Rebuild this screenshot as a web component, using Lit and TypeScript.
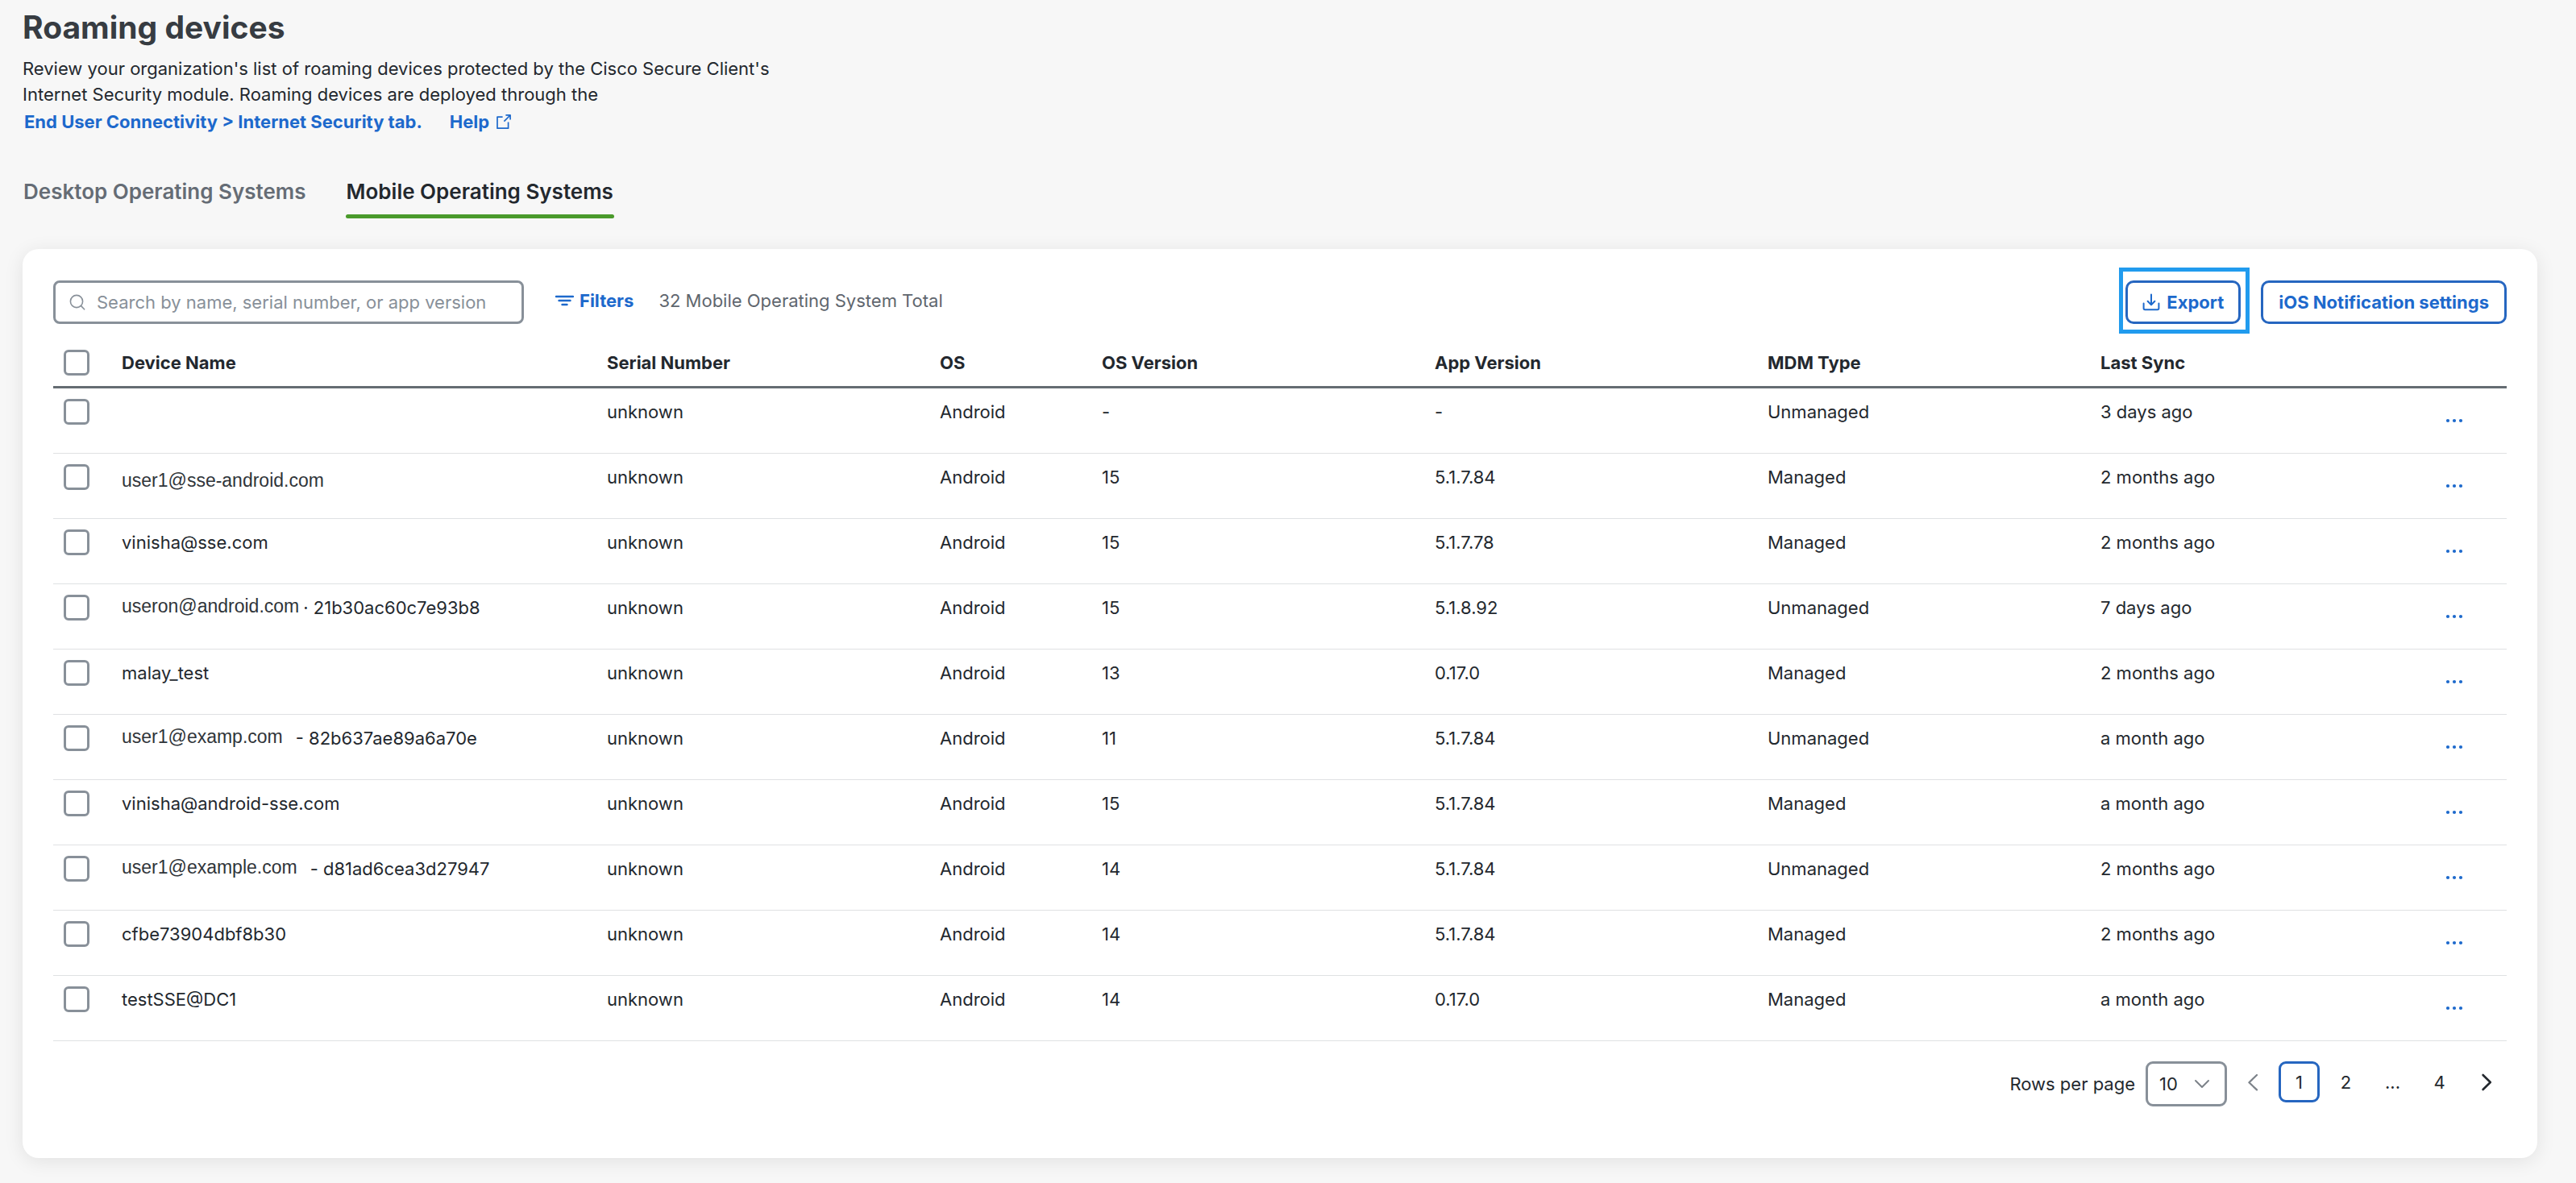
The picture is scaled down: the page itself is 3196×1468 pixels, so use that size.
import { LitElement, html, css, nothing } from "lit";
import { customElement } from "lit/decorators.js";
import { classMap } from "lit/directives/class-map.js";

interface Device {
  name: string;
  /** Name comes from a directory alias and is set in the alias typeface. */
  alias?: boolean;
  separator?: string;
  id?: string;
  osVersion: string;
  appVersion: string;
  mdm: string;
  sync: string;
}

const DEVICES: Device[] = [
  { name: "", osVersion: "-", appVersion: "-", mdm: "Unmanaged", sync: "3 days ago" },
  { name: "user1@sse-android.com", alias: true, osVersion: "15", appVersion: "5.1.7.84", mdm: "Managed", sync: "2 months ago" },
  { name: "vinisha@sse.com", osVersion: "15", appVersion: "5.1.7.78", mdm: "Managed", sync: "2 months ago" },
  { name: "useron@android.com", alias: true, separator: "·", id: "21b30ac60c7e93b8", osVersion: "15", appVersion: "5.1.8.92", mdm: "Unmanaged", sync: "7 days ago" },
  { name: "malay_test", osVersion: "13", appVersion: "0.17.0", mdm: "Managed", sync: "2 months ago" },
  { name: "user1@examp.com", alias: true, separator: "-", id: "82b637ae89a6a70e", osVersion: "11", appVersion: "5.1.7.84", mdm: "Unmanaged", sync: "a month ago" },
  { name: "vinisha@android-sse.com", osVersion: "15", appVersion: "5.1.7.84", mdm: "Managed", sync: "a month ago" },
  { name: "user1@example.com", alias: true, separator: "-", id: "d81ad6cea3d27947", osVersion: "14", appVersion: "5.1.7.84", mdm: "Unmanaged", sync: "2 months ago" },
  { name: "cfbe73904dbf8b30", osVersion: "14", appVersion: "5.1.7.84", mdm: "Managed", sync: "2 months ago" },
  { name: "testSSE@DC1", osVersion: "14", appVersion: "0.17.0", mdm: "Managed", sync: "a month ago" },
];

const searchIcon = html`<svg width="20" height="20" viewBox="0 0 20 20" stroke-width="1.6" stroke-linecap="round" aria-hidden="true">
  <circle cx="9" cy="9" r="7.6" /><path d="M14.6 14.6 18.6 18.8" />
</svg>`;

const filterIcon = html`<svg width="24" height="16" viewBox="0 0 24 16" stroke-width="2.4" stroke-linecap="round" aria-hidden="true">
  <path d="M2 3h21M5.5 8h14M9.5 13h6" />
</svg>`;

const exportIcon = html`<svg width="22" height="22" viewBox="0 0 22 22" stroke-width="2" stroke-linecap="round" stroke-linejoin="round" aria-hidden="true">
  <path d="M11 1.5v12.5M6.6 9.8 11 14.2l4.4-4.4M1.6 12.6v6a1.6 1.6 0 0 0 1.6 1.6h15.6a1.6 1.6 0 0 0 1.6-1.6v-6" />
</svg>`;

const externalIcon = html`<svg width="20" height="20" viewBox="0 0 20 20" stroke-width="1.7" stroke-linejoin="round" aria-hidden="true">
  <path d="M8.6 4.2H2V18.2H15.6V10.6M10.4 9.6 18 2M12.4 1.9H18.1V7.6" />
</svg>`;

const moreIcon = html`<svg width="24" height="24" viewBox="0 0 24 24" aria-hidden="true">
  <circle class="dot" cx="4" cy="12" r="2.1" /><circle class="dot" cx="12" cy="12" r="2.1" /><circle class="dot" cx="20" cy="12" r="2.1" />
</svg>`;

@customElement("app-root")
export class AppRoot extends LitElement {
  static styles = css`
    :host {
      display: block;
      box-sizing: border-box;
      min-height: 100vh;
      padding: 10px 48px 31px 28px;
      background: #f7f7f7;
      color: #23282e;
      font: 400 22px/32px Inter, "Liberation Sans", sans-serif;
    }
    * { box-sizing: border-box; }
    svg { display: block; flex: none; fill: none; stroke: currentColor; }
    .dot { fill: currentColor; stroke: none; }
    button, input, select { font: inherit; color: inherit; margin: 0; }
    button { background: none; border: 0; padding: 0; cursor: pointer; }

    .title { margin: 0; font-size: 39px; line-height: 48px; font-weight: 700; color: #373c42; }
    .intro { margin: 11px 0 0; max-width: 960px; }
    .links { display: flex; gap: 34px; margin-top: 2px; padding-left: 2px; }
    .link { display: flex; align-items: center; gap: 8px; color: #1d69cc; font-weight: 700; text-decoration: none; }

    .tabs { display: flex; gap: 48px; margin-top: 45px; }
    .tab { padding: 8px 1px 0; font-size: 26px; line-height: 36px; font-weight: 600; color: #656c75; }
    .tab::after { content: ""; display: block; height: 5px; margin: 10px -1px 0; border-radius: 3px; }
    .tab.active { color: #23282e; }
    .tab.active::after { background: #4a9a2b; }

    .card { margin-top: 38px; padding: 39px 38px 64px; background: #fff; border-radius: 20px; box-shadow: 0 4px 24px rgba(0, 0, 0, 0.09); }

    .toolbar { display: flex; align-items: center; }
    .search { display: flex; align-items: center; gap: 14px; width: 584px; height: 54px; padding: 0 17px; border: 3px solid #889099; border-radius: 8px; color: #889099; }
    .search-input { flex: 1; min-width: 0; padding: 0; border: 0; outline: 0; background: none; }
    .search-input::placeholder { color: #889099; opacity: 1; }
    .summary { display: flex; align-items: center; gap: 31px; padding: 0 0 4px 38px; }
    .filters { display: flex; align-items: center; gap: 7px; color: #1d69cc; font-weight: 700; }
    .total { color: #5f666e; }
    .actions { display: flex; gap: 25px; margin-left: auto; }
    .outlined { display: flex; align-items: center; gap: 8px; height: 54px; padding: 0 18px; border: 3px solid #2666c0; border-radius: 10px; color: #1d69cc; font-weight: 700; }
    .outlined.wide { padding: 0 19px; }
    .export { position: relative; }
    .marker { position: absolute; inset: -16px -11px -12px -8px; border: 5px solid #219bee; pointer-events: none; }

    .devices { width: 100%; margin-top: 16px; border-collapse: separate; border-spacing: 0; table-layout: fixed; }
    .col-check { width: 85px; }
    .col-name { width: 602px; }
    .col-wide { width: 413px; }
    .col-os { width: 201px; }
    .col-more { width: 91px; }
    .head { padding: 16px 0 13px; border-bottom: 3px solid #656c72; text-align: left; font-weight: 700; }
    .cell { height: 81px; padding: 13px 0 0; border-bottom: 1px solid #dfe1e3; vertical-align: top; }
    .head.check-cell, .cell.check-cell { padding-left: 13px; }
    .cell.more-cell { padding: 28px 0 0 14px; }
    .check { appearance: none; display: block; width: 32px; height: 32px; border: 3px solid #889099; border-radius: 6px; background: #fff; }
    .name { display: flex; align-items: flex-start; gap: 16px; white-space: nowrap; }
    .name.tight { gap: 5px; }
    .alias { font-family: "Liberation Sans", Arial, sans-serif; font-size: 23px; line-height: 28px; color: #30353a; }
    .alias.single { line-height: 40px; }
    .more { display: block; color: #1d69cc; }

    .footer { display: flex; justify-content: flex-end; align-items: flex-start; gap: 6px; margin-top: 25px; }
    .rows { display: flex; align-items: center; gap: 13px; }
    .select-wrap { display: grid; align-items: center; }
    .select { grid-area: 1 / 1; appearance: none; width: 101px; height: 56px; padding: 0 14px; border: 3px solid #889099; border-radius: 9px; background: #fff; }
    .select-arrow { grid-area: 1 / 1; justify-self: end; margin-right: 21px; color: #7c8289; pointer-events: none; }
    .pager { display: flex; gap: 7px; }
    .page { display: flex; align-items: center; justify-content: center; width: 51px; height: 51px; border: 3px solid transparent; border-radius: 9px; }
    .page.current { border-color: #2666c0; }
    .page.disabled { color: #7c8289; }
  `;

  private renderName(d: Device) {
    return html`<div class=${classMap({ name: true, tight: d.separator === "·" })}>
      <span class=${classMap({ alias: !!d.alias, single: !!d.alias && !d.id })}>${d.name}</span>
      ${d.id ? html`<span>${d.separator} ${d.id}</span>` : nothing}
    </div>`;
  }

  private renderRow(d: Device) {
    return html`<tr>
      <td class="cell check-cell"><input class="check" type="checkbox" aria-label="Select ${d.name || "device"}" /></td>
      <td class="cell">${this.renderName(d)}</td>
      <td class="cell">unknown</td>
      <td class="cell">Android</td>
      <td class="cell">${d.osVersion}</td>
      <td class="cell">${d.appVersion}</td>
      <td class="cell">${d.mdm}</td>
      <td class="cell">${d.sync}</td>
      <td class="cell more-cell"><button class="more" aria-label="More actions">${moreIcon}</button></td>
    </tr>`;
  }

  render() {
    return html`
      <h1 class="title">Roaming devices</h1>
      <p class="intro">
        Review your organization's list of roaming devices protected by the Cisco Secure Client's Internet Security
        module. Roaming devices are deployed through the
      </p>
      <div class="links">
        <a class="link" href="#">End User Connectivity &gt; Internet Security tab.</a>
        <a class="link" href="#">Help ${externalIcon}</a>
      </div>
      <div class="tabs" role="tablist">
        <button class="tab" role="tab" aria-selected="false">Desktop Operating Systems</button>
        <button class="tab active" role="tab" aria-selected="true">Mobile Operating Systems</button>
      </div>
      <div class="card">
        <div class="toolbar">
          <label class="search">
            ${searchIcon}
            <input class="search-input" type="text" aria-label="Search devices" placeholder="Search by name, serial number, or app version" />
          </label>
          <div class="summary">
            <button class="filters">${filterIcon}Filters</button>
            <span class="total">32 Mobile Operating System Total</span>
          </div>
          <div class="actions">
            <div class="export">
              <button class="outlined">${exportIcon}Export</button>
              <span class="marker"></span>
            </div>
            <button class="outlined wide">iOS Notification settings</button>
          </div>
        </div>
        <table class="devices">
          <colgroup>
            <col class="col-check" />
            <col class="col-name" />
            <col class="col-wide" />
            <col class="col-os" />
            <col class="col-wide" />
            <col class="col-wide" />
            <col class="col-wide" />
            <col class="col-wide" />
            <col class="col-more" />
          </colgroup>
          <thead>
            <tr>
              <th class="head check-cell"><input class="check" type="checkbox" aria-label="Select all devices" /></th>
              <th class="head">Device Name</th>
              <th class="head">Serial Number</th>
              <th class="head">OS</th>
              <th class="head">OS Version</th>
              <th class="head">App Version</th>
              <th class="head">MDM Type</th>
              <th class="head">Last Sync</th>
              <th class="head"></th>
            </tr>
          </thead>
          <tbody>
            ${DEVICES.map((d) => this.renderRow(d))}
          </tbody>
        </table>
        <div class="footer">
          <div class="rows">
            <label for="rows-per-page">Rows per page</label>
            <div class="select-wrap">
              <select class="select" id="rows-per-page">
                <option>10</option>
              </select>
              <svg class="select-arrow" width="20" height="12" viewBox="0 0 20 12" stroke-width="2" stroke-linecap="round" stroke-linejoin="round" aria-hidden="true"><path d="M2 2l8 8 8-8" /></svg>
            </div>
          </div>
          <nav class="pager" aria-label="Pages">
            <button class="page disabled" aria-label="Previous page">
              <svg width="14" height="22" viewBox="0 0 14 22" stroke-width="2.2" stroke-linecap="round" stroke-linejoin="round"><path d="M12 2 2.4 11.3 12 20.4" /></svg>
            </button>
            <button class="page current" aria-current="page">1</button>
            <button class="page">2</button>
            <span class="page">...</span>
            <button class="page">4</button>
            <button class="page" aria-label="Next page">
              <svg width="14" height="22" viewBox="0 0 14 22" stroke-width="2.6" stroke-linecap="round" stroke-linejoin="round"><path d="M2.6 2 11.8 11 2.6 20" /></svg>
            </button>
          </nav>
        </div>
      </div>
    `;
  }
}
